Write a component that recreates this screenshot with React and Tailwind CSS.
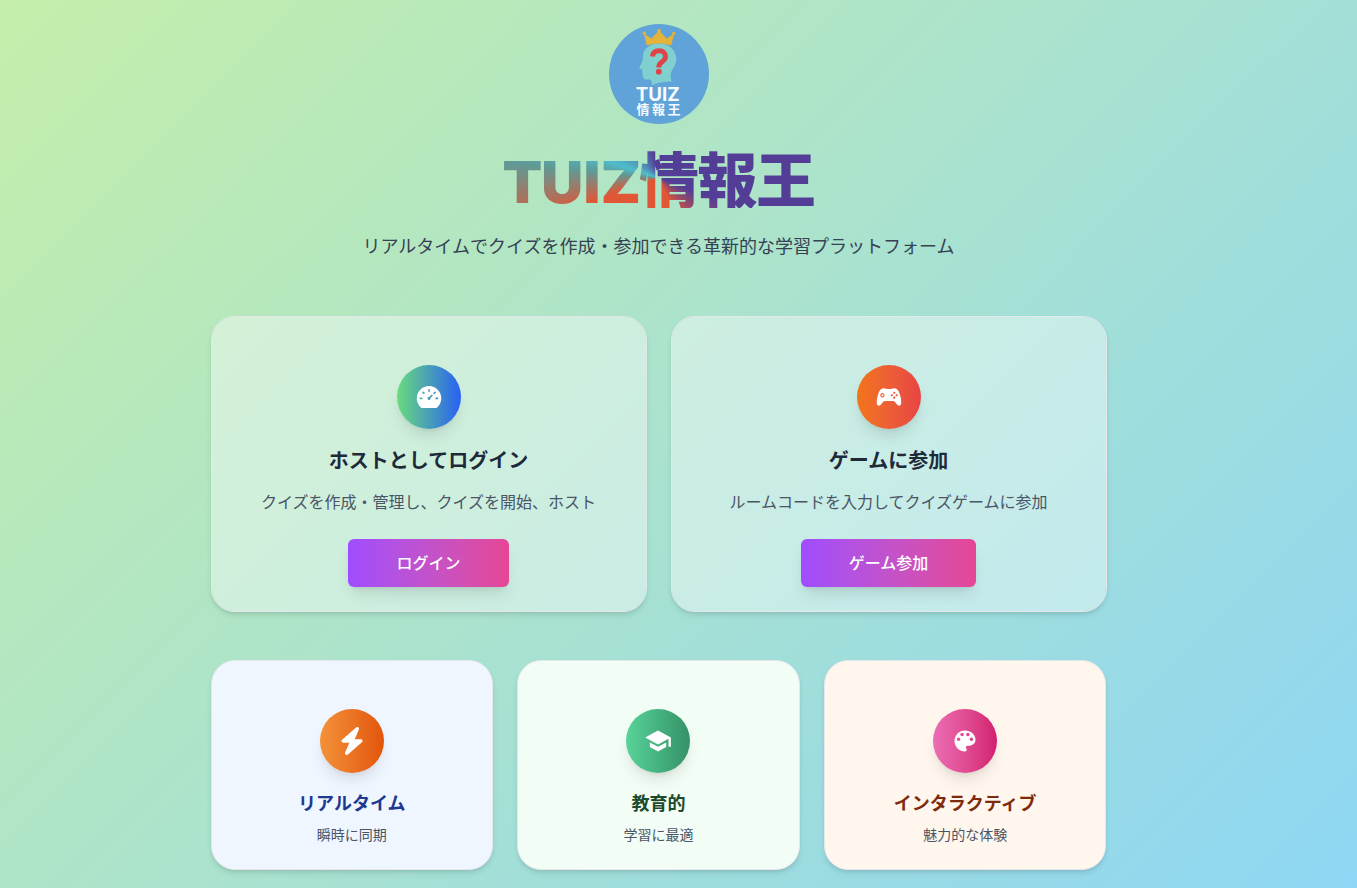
import { AiFillDashboard } from "react-icons/ai";
import { IoLogoGameControllerB } from "react-icons/io";
import { FaBolt } from "react-icons/fa6";
import { MdSchool } from "react-icons/md";

function PaletteIcon({ size }) {
  return (
    <svg width={size} height={size} viewBox="0 0 24 24" fill="currentColor">
      <path d="M12 3c-4.970 0-9 4.030-9 9s4.030 9 9 9c.83 0 1.500-.67 1.500-1.500 0-.39-.15-.74-.39-1.010-.23-.26-.38-.61-.38-.99 0-.83.67-1.500 1.500-1.500H16c2.760 0 5-2.240 5-5 0-4.420-4.030-8-9-8zm-5.500 9c-.83 0-1.500-.67-1.500-1.500S5.670 9 6.500 9 8 9.670 8 10.500 7.330 12 6.500 12zm3-4C8.670 8 8 7.330 8 6.500S8.670 5 9.500 5s1.500.67 1.500 1.500S10.330 8 9.500 8zm5 0c-.83 0-1.500-.67-1.500-1.500S13.670 5 14.500 5s1.500.67 1.500 1.500S15.330 8 14.500 8zm3 4c-.83 0-1.500-.67-1.500-1.500S16.670 9 17.500 9s1.500.67 1.500 1.500-.67 1.500-1.500 1.500z" />
    </svg>
  );
}

function Logo() {
  return (
    <svg viewBox="0 0 100 100" className="block size-[100px]" role="img" aria-label="TUIZ情報王">
      <circle cx="50" cy="50" r="50" fill="#5fa3d9" />
      <path d="M50 19.500C41 19.500 34.500 25 34 31C34 36 33.500 38 30.300 43.500C30.300 45 32.500 45 33.200 45.500L33.500 50C34 54 34.500 55.500 38 55.500L41 55.500C43 56.500 43 58 42.700 61.500C48 58.500 56 57.500 62.700 57.500C61 52 61.500 48.500 64 44.500C66.500 41 67.300 38 67.300 34.500C66.500 25 59.500 19.500 50 19.500Z" fill="#7fd0cf" />
      <path d="M34.800 9.500L42.300 14.500L50 6.500L57.700 14.500L65.200 9.500L62.200 21.500Q50 17.500 37.800 21.500Z" fill="#e3b33c" />
      <g fill="#e3b33c"><circle cx="35.300" cy="9.300" r="1.700" /><circle cx="50" cy="6.800" r="1.900" /><circle cx="64.700" cy="9.500" r="1.700" /></g>
      <path d="M43.500 32.500C44 28 46.500 26.800 50 26.800C54 26.800 56.500 29 56.500 32.500C56.500 35.500 55 36.500 52.800 38C50.500 39.500 49.800 41 49.800 43.500" fill="none" stroke="#df4548" strokeWidth="5" />
      <circle cx="49.800" cy="47.700" r="2.900" fill="#df4548" />
      <text x="48.800" y="76.700" textAnchor="middle" textLength="44" lengthAdjust="spacingAndGlyphs" fill="#f7fbff" className="font-['Inter'] text-[18.500px] font-bold">TUIZ</text>
      <text x="49.500" y="89.500" textAnchor="middle" textLength="44" fill="#f7fbff" className="font-['Noto_Sans_CJK_JP'] text-[13px] font-bold">情報王</text>
    </svg>
  );
}

function IconDisc({ icon: Icon, gradient }) {
  return (
    <div className={`flex size-16 items-center justify-center rounded-full text-white shadow-lg ${gradient}`}>
      <Icon size={28} />
    </div>
  );
}

function ActionCard({ icon, gradient, title, text, button }) {
  return (
    <section className="flex h-[296px] flex-col items-center rounded-3xl border border-gray-200 bg-white/40 bg-clip-padding pt-12 shadow-md">
      <IconDisc icon={icon} gradient={gradient} />
      <h2 className="mt-[18px] text-xl leading-7 font-bold text-gray-800">{title}</h2>
      <p className="mt-[15px] text-base leading-6 text-gray-600">{text}</p>
      <button className="mt-[25px] h-12 rounded-md bg-linear-to-r from-[#a04cff] to-[#e64694] px-12 text-base font-medium text-white shadow-lg">{button}</button>
    </section>
  );
}

function FeatureCard({ icon, gradient, title, text, card, titleColor }) {
  return (
    <section className={`flex h-[210px] flex-col items-center rounded-3xl border border-gray-200 pt-12 shadow-md ${card}`}>
      <IconDisc icon={icon} gradient={gradient} />
      <h3 className={`mt-4 text-lg leading-7 font-bold ${titleColor}`}>{title}</h3>
      <p className="mt-2 text-sm leading-5 text-gray-600">{text}</p>
    </section>
  );
}

export default function App() {
  return (
    <main className="h-[888px] overflow-hidden bg-[linear-gradient(135deg,#c4eeaa,#8ed6f4)] pt-6 pr-10 font-['Noto_Sans','Noto_Sans_CJK_JP',sans-serif]">
      <div className="mx-auto flex w-[896px] flex-col">
        <header className="flex flex-col items-center">
          <Logo />
          <h1 className="mt-6 h-[60px] bg-[conic-gradient(from_0deg_at_50%_50%,#533d96_0deg,#533d96_110deg,#e15635_155deg,#e15635_250deg,#5f9a96_276deg,#4fbccb_288deg,#533d96_350deg)] bg-clip-text font-['Inter','Noto_Sans_CJK_JP',sans-serif] text-6xl leading-[67px] font-black tracking-tight text-transparent">
            <span className="text-[58px] tracking-[0.4px]"><span className="tracking-[-1px]">T</span>UI<span className="tracking-[-2px]">Z</span></span>情報王
          </h1>
          <p className="mt-6 text-lg leading-7 text-gray-700">リアルタイムでクイズを作成・参加できる革新的な学習プラットフォーム</p>
        </header>
        <div className="mt-14 grid grid-cols-2 gap-6">
          <ActionCard icon={AiFillDashboard} gradient="bg-linear-to-r/srgb from-[#68dc7c] to-[#2860f4]" title="ホストとしてログイン" text="クイズを作成・管理し、クイズを開始、ホスト" button="ログイン" />
          <ActionCard icon={IoLogoGameControllerB} gradient="bg-linear-to-r from-[#f27518] to-[#e74444]" title="ゲームに参加" text="ルームコードを入力してクイズゲームに参加" button="ゲーム参加" />
        </div>
        <div className="mt-12 grid grid-cols-3 gap-6">
          <FeatureCard icon={FaBolt} gradient="bg-linear-to-r from-[#f39138] to-[#e25407]" title="リアルタイム" text="瞬時に同期" card="bg-[#eff6ff]" titleColor="text-[#1c398e]" />
          <FeatureCard icon={MdSchool} gradient="bg-linear-to-r from-[#58d39a] to-[#349267]" title="教育的" text="学習に最適" card="bg-[#f2fdf5]" titleColor="text-[#1c4a2b]" />
          <FeatureCard icon={PaletteIcon} gradient="bg-linear-to-r from-[#ec6db5] to-[#d31e70]" title="インタラクティブ" text="魅力的な体験" card="bg-[#fff6ed]" titleColor="text-[#7e2a0c]" />
        </div>
      </div>
    </main>
  );
}
